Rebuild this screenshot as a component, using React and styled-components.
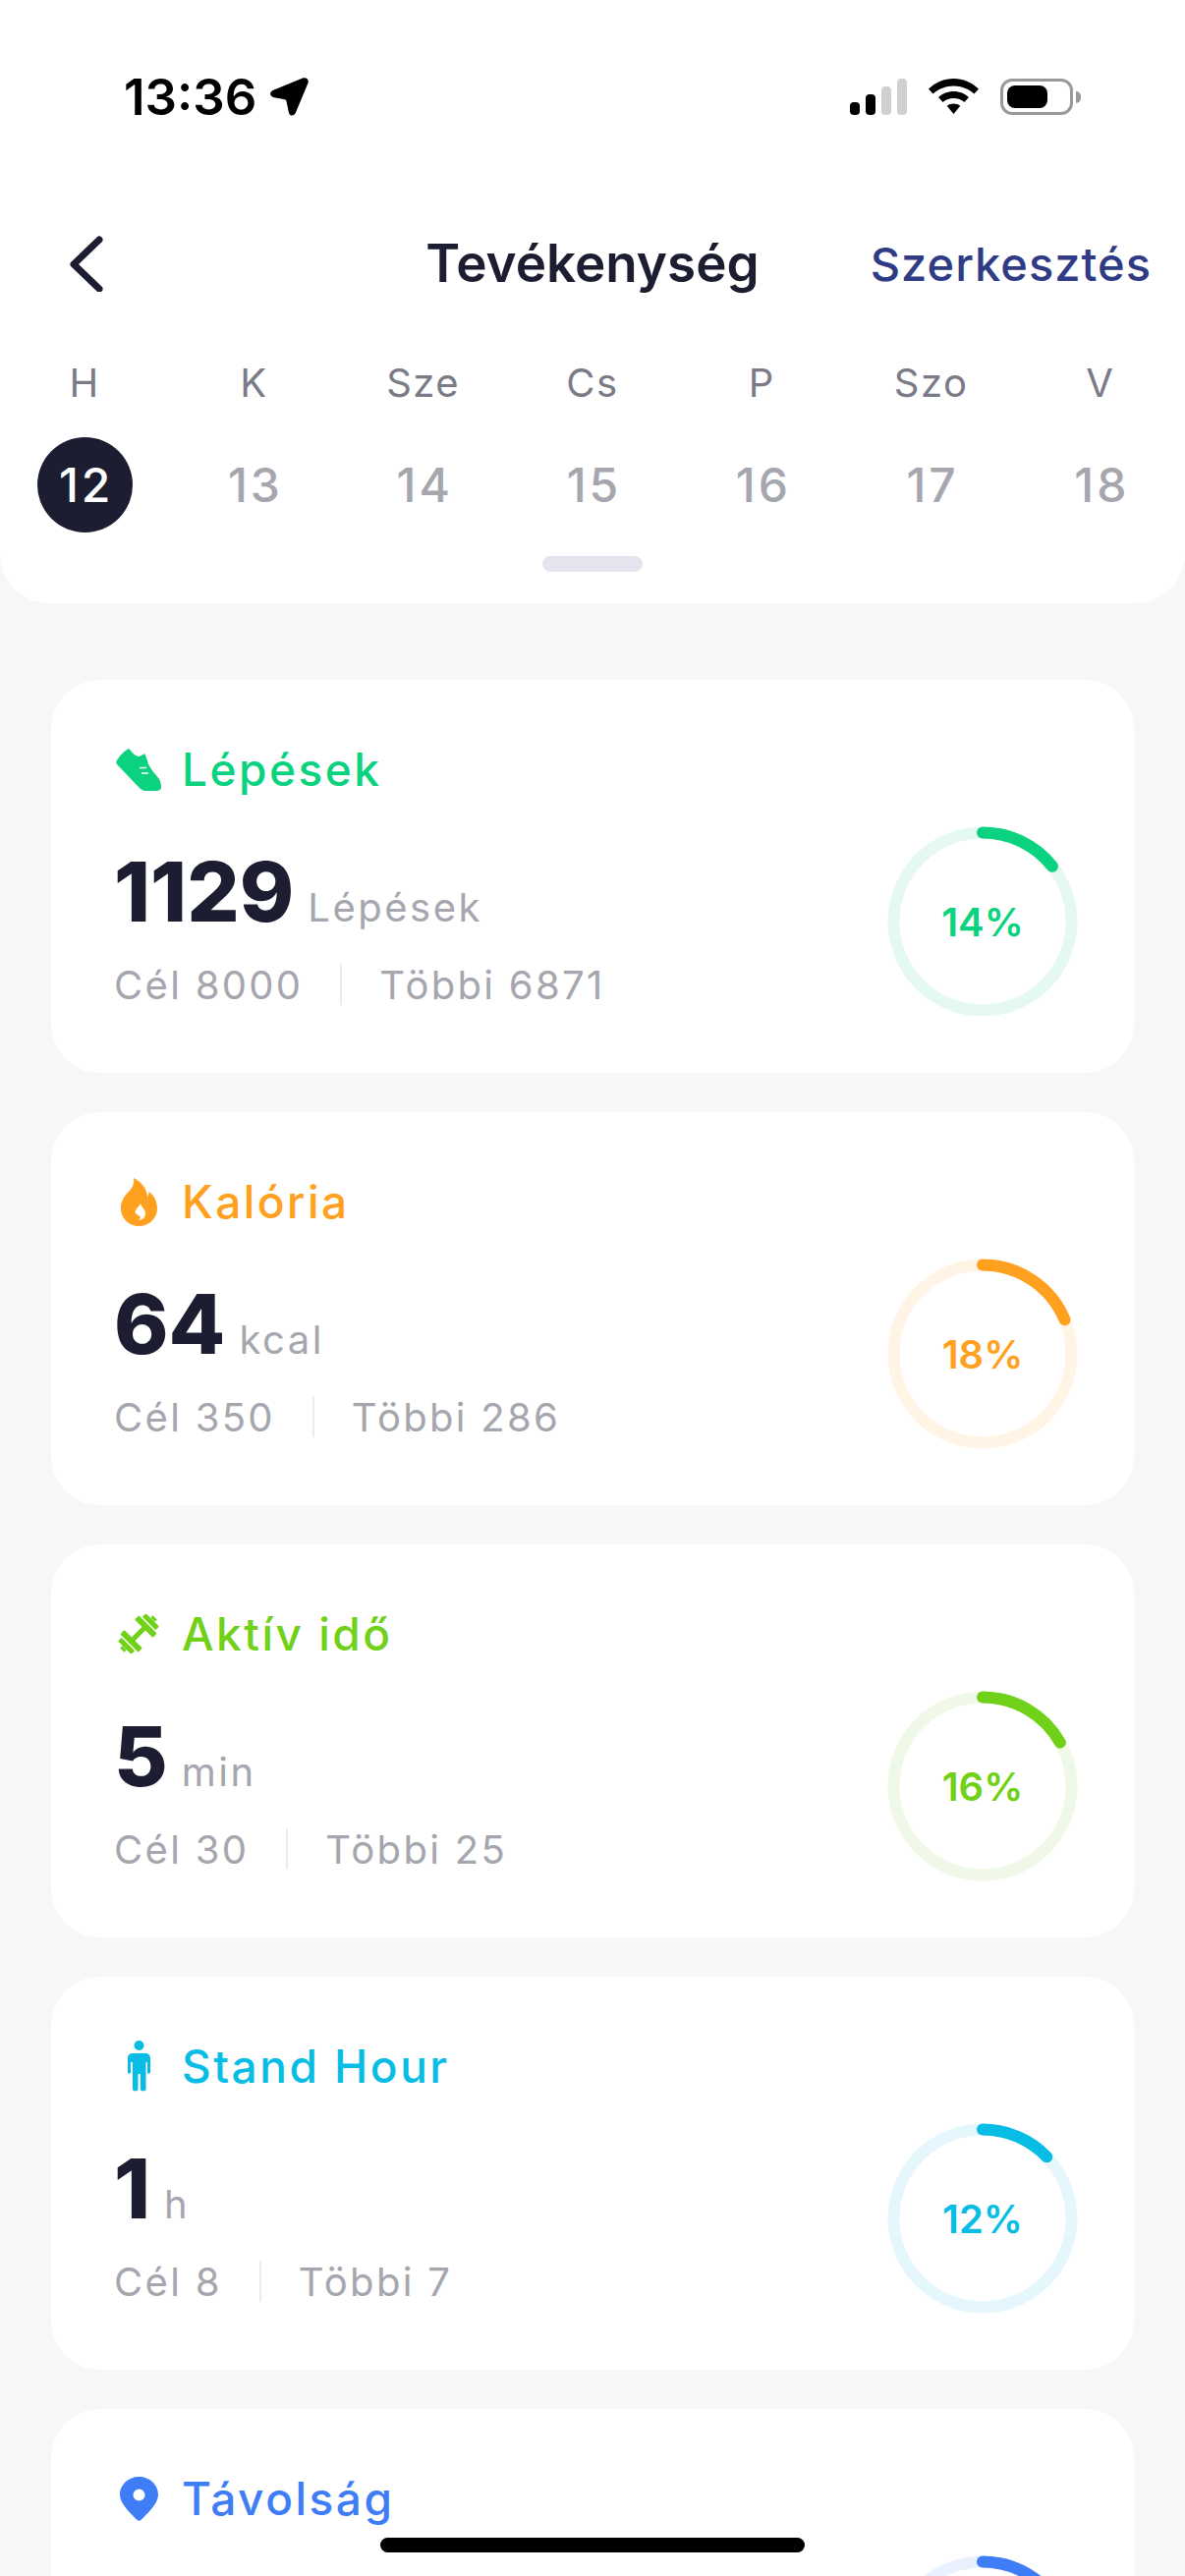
import styled, { createGlobalStyle } from "styled-components";

const GlobalStyle = createGlobalStyle`
  html, body {
    margin: 0;
    padding: 0;
    background: #f6f7f9;
  }
  * { box-sizing: border-box; }
`;

const days = [
  { label: "H", date: 12, active: true },
  { label: "K", date: 13 },
  { label: "Sze", date: 14 },
  { label: "Cs", date: 15 },
  { label: "P", date: 16 },
  { label: "Szo", date: 17 },
  { label: "V", date: 18 },
];

const ShoeIcon = () => (
  <svg width="46" height="43" viewBox="0 0 46 43">
    <path fill="currentColor" d="M1 12 C4 7 9 2 13 0 C15 1 17 6 22 8 C25 8 27 6 29 5 C31 8 32 12 33 16 C36 22 41 27 44 31 C46 34 46 38 46 40 C45 42 44 43 41 43 L30 43 C27 43 24 40 21 37 L2 17 C0 15 0 14 1 12 Z" />
    <path stroke="#fff" strokeWidth="1.6" d="M24 19.500 H31 M26 25 H33" />
  </svg>
);

const FlameIcon = () => (
  <svg width="37" height="49" viewBox="0 0 37 49">
    <path fill="currentColor" d="M13 0 C21 4 27 11 27 20 C28 18 28.500 16 28.500 14 C34 18 37 24 37 31 C37 41 29 49 18.500 49 C8 49 0 41 0 31 C0 24 3 19 7 15 C11 11 14 7 13 0 Z" />
    <path fill="#fff" d="M20 26 C21 30 25 32 25 36 C25 40 22 43 18 43 C21 41 20 39 18 38 C16 37 14 36 15 33 C16 30 19 29 20 26 Z" />
  </svg>
);

const DumbbellIcon = () => (
  <svg width="42" height="40" viewBox="-21 -20 42 40">
    <g fill="currentColor" transform="rotate(-45)">
      <rect x="-8" y="-2.500" width="16" height="5" />
      <rect x="-13.500" y="-13" width="6" height="26" rx="1" />
      <rect x="7.500" y="-13" width="6" height="26" rx="1" />
      <rect x="-20" y="-9.500" width="5" height="19" rx="1" />
      <rect x="15" y="-9.500" width="5" height="19" rx="1" />
      <rect x="-23.500" y="-3" width="3" height="6" />
      <rect x="20.500" y="-3" width="3" height="6" />
    </g>
  </svg>
);

const PersonIcon = () => (
  <svg width="23" height="52" viewBox="0 0 23 52">
    <circle cx="11.500" cy="5" r="5" fill="currentColor" />
    <path fill="currentColor" d="M5 13 H18 C21 13 23 15 23 18 V32 C23 34 20 34 20 32 V22 H18.500 V49.500 C18.500 52 13 52 13 49.500 V34 H10.500 V49.500 C10.500 52 5 52 5 49.500 V22 H3 V32 C3 34 0 34 0 32 V18 C0 15 2 13 5 13 Z" />
  </svg>
);

const PinIcon = () => (
  <svg width="39" height="45" viewBox="0 0 39 45">
    <path fill="currentColor" fillRule="evenodd" d="M19.500 0 C30 0 39 8 39 18 C39 28 28 37 21.500 44 C20.500 45 18.500 45 17.500 44 C11 37 0 28 0 18 C0 8 9 0 19.500 0 Z M19.500 12.500 A6 6 0 1 0 19.500 24.500 A6 6 0 1 0 19.500 12.500 Z" />
  </svg>
);

// the fifth card is cut by the bottom of the screen, only its title and the top of its ring show
const cards = [
  { title: "Lépések", color: "#0bd27e", track: "#e6f9f1", Icon: ShoeIcon, value: "1129", unit: "Lépések", goal: "Cél 8000", left: "Többi 6871", percent: 14, arc: 14.300 },
  { title: "Kalória", color: "#ffa01e", track: "#fff4e6", Icon: FlameIcon, value: "64", unit: "kcal", goal: "Cél 350", left: "Többi 286", percent: 18, arc: 18.700 },
  { title: "Aktív idő", color: "#6fd118", track: "#f0f9e7", Icon: DumbbellIcon, value: "5", unit: "min", goal: "Cél 30", left: "Többi 25", percent: 16, arc: 16.800 },
  { title: "Stand Hour", color: "#08bde5", track: "#e5f7fc", Icon: PersonIcon, value: "1", unit: "h", goal: "Cél 8", left: "Többi 7", percent: 12, arc: 12.800 },
  { title: "Távolság", color: "#3f7df6", track: "#e9f0fe", Icon: PinIcon, arc: 16.800 },
];

const Ring = ({ percent, arc, color, track }) => {
  const r = 90.500;
  const length = 2 * Math.PI * r;
  const dash = (length * arc) / 100;
  return (
    <RingBox>
      <svg width="194" height="194" viewBox="0 0 194 194">
        <circle cx="97" cy="97" r={r} fill="none" stroke={track} strokeWidth="12" />
        <circle
          cx="97"
          cy="97"
          r={r}
          fill="none"
          stroke={color}
          strokeWidth="12"
          strokeLinecap="round"
          strokeDasharray={`${dash} ${length}`}
          transform="rotate(-90 97 97)"
        />
      </svg>
      {percent && <RingLabel $color={color}>{percent}%</RingLabel>}
    </RingBox>
  );
};

const ActivityCard = ({ title, color, track, Icon, value, unit, goal, left, percent, arc }) => (
  <Card>
    <CardInfo>
      <CardTitle $color={color}>
        <IconSlot><Icon /></IconSlot>
        {title}
      </CardTitle>
      {value && (
        <>
          <ValueRow>
            <Value>{value}</Value>
            <Unit>{unit}</Unit>
          </ValueRow>
          <GoalRow>
            <span>{goal}</span>
            <GoalDivider />
            <span>{left}</span>
          </GoalRow>
        </>
      )}
    </CardInfo>
    <Ring percent={percent} arc={arc} color={color} track={track} />
  </Card>
);

const App = () => (
  <>
    <GlobalStyle />
    <Page>
      <Header>
        <StatusBar>
          <Clock>
            13:36
            <svg width="39" height="39" viewBox="0 0 39 39">
              <path fill="#000" d="M33 0.500 C37 -0.500 39.500 2 38.500 5.500 L26 35.500 C24.500 39.500 20 39.500 19 36 L16.500 24 C16.300 23 15.800 22.500 14.800 22.300 L3 20 C-0.500 19 -1 15 2.500 13 Z" />
            </svg>
          </Clock>
          <StatusIcons>
            <svg width="58" height="37" viewBox="0 0 58 37">
              <rect x="0" y="24" width="10" height="13" rx="4" fill="#000" />
              <rect x="16" y="16" width="10" height="21" rx="4" fill="#000" />
              <rect x="32" y="8" width="10" height="29" rx="4" fill="#cfcfcf" />
              <rect x="48" y="0" width="10" height="37" rx="4" fill="#cfcfcf" />
            </svg>
            <svg width="51" height="36" viewBox="0 0 51 36">
              <path fill="#000" d="M25.500 0 C35 0 44 4 51 10.500 L46.500 15.500 C41 10.500 33.500 7.500 25.500 7.500 C17.500 7.500 10 10.500 4.500 15.500 L0 10.500 C7 4 16 0 25.500 0 Z" />
              <path fill="#000" d="M25.500 13 C31.500 13 37 15.300 41 19 L36.500 24 C33.500 21.500 29.700 20 25.500 20 C21.300 20 17.500 21.500 14.500 24 L10 19 C14 15.300 19.500 13 25.500 13 Z" />
              <path fill="#000" d="M25.500 25.500 C28 25.500 30.300 26.300 32.300 27.800 L25.500 36 L18.700 27.800 C20.700 26.300 23 25.500 25.500 25.500 Z" />
            </svg>
            <Battery>
              <BatteryFill />
              <BatteryNub />
            </Battery>
          </StatusIcons>
        </StatusBar>
        <NavBar>
          <BackButton>
            <svg width="34" height="58" viewBox="0 0 34 58">
              <path fill="none" stroke="#1c1d30" strokeWidth="7" strokeLinecap="round" strokeLinejoin="round" d="M30 5 L4 30 L30 55" />
            </svg>
          </BackButton>
          <NavTitle>Tevékenység</NavTitle>
          <EditLink>Szerkesztés</EditLink>
        </NavBar>
        <Week>
          {days.map((d) => (
            <Day key={d.label}>
              <DayLabel>{d.label}</DayLabel>
              <DayDate $active={d.active}>{d.date}</DayDate>
            </Day>
          ))}
        </Week>
        <Handle />
      </Header>
      <CardList>
        {cards.map((c) => (
          <ActivityCard key={c.title} {...c} />
        ))}
      </CardList>
      <HomeIndicator />
    </Page>
  </>
);

const Page = styled.div`
  position: relative;
  width: 1206px;
  height: 2622px;
  overflow: hidden;
  background: #f6f7f9;
  font-family: Inter, "Noto Sans", "Liberation Sans", sans-serif;
`;

const Header = styled.header`
  height: 614px;
  background: #fff;
  border-radius: 0 0 50px 50px;
  display: flex;
  flex-direction: column;
`;

const StatusBar = styled.div`
  margin-top: 68px;
  height: 60px;
  padding: 0 114px 0 126px;
  display: flex;
  justify-content: space-between;
  align-items: center;
`;

const Clock = styled.div`
  display: flex;
  align-items: center;
  gap: 14px;
  font-size: 51px;
  font-weight: 600;
  color: #000;
`;

const StatusIcons = styled.div`
  display: flex;
  align-items: center;
  gap: 22px;
`;

const Battery = styled.div`
  position: relative;
  width: 74px;
  height: 37px;
  border: 3px solid #999;
  border-radius: 12px;
  padding: 4px;
`;

const BatteryFill = styled.div`
  width: 41px;
  height: 100%;
  background: #000;
  border-radius: 8px;
`;

const BatteryNub = styled.div`
  position: absolute;
  right: -11px;
  top: 10px;
  width: 5px;
  height: 12px;
  background: #999;
  border-radius: 0 6px 6px 0;
`;

const NavBar = styled.div`
  margin-top: 109px;
  height: 62px;
  padding: 0 34px 0 71px;
  display: flex;
  align-items: center;
  justify-content: space-between;
  position: relative;
`;

const BackButton = styled.div`
  width: 34px;
  height: 58px;
`;

const NavTitle = styled.h1`
  position: absolute;
  left: 0;
  right: 0;
  margin: 0;
  text-align: center;
  font-size: 53px;
  font-weight: 600;
  color: #1c1d30;
`;

const EditLink = styled.div`
  font-size: 47px;
  font-weight: 500;
  color: #2f3b85;
  letter-spacing: 1px;
`;

const Week = styled.div`
  margin-top: 66px;
  display: grid;
  grid-template-columns: repeat(7, 1fr);
`;

const Day = styled.div`
  display: flex;
  flex-direction: column;
  align-items: center;
  gap: 30px;
`;

const DayLabel = styled.div`
  height: 50px;
  line-height: 50px;
  font-size: 40px;
  color: #7a7b87;
  letter-spacing: 1.500px;
`;

const DayDate = styled.div`
  width: 97px;
  height: 97px;
  border-radius: 50%;
  display: flex;
  align-items: center;
  justify-content: center;
  font-size: 48px;
  font-weight: 500;
  letter-spacing: 3px;
  text-indent: 3px;
  color: ${(p) => (p.$active ? "#fff" : "#a5a6ae")};
  background: ${(p) => (p.$active ? "#1c1d30" : "transparent")};
`;

const Handle = styled.div`
  align-self: center;
  margin-top: 24px;
  width: 102px;
  height: 16px;
  border-radius: 8px;
  background: #e4e4ee;
`;

const CardList = styled.main`
  padding: 78px 52px 0 52px;
  display: flex;
  flex-direction: column;
  gap: 40px;
`;

const Card = styled.section`
  flex: none;
  height: 400px;
  background: #fff;
  border-radius: 50px;
  padding: 61px 57px 57px 64px;
  display: flex;
  justify-content: space-between;
`;

const CardInfo = styled.div`
  display: flex;
  flex-direction: column;
`;

const CardTitle = styled.div`
  height: 60px;
  display: flex;
  align-items: center;
  gap: 19px;
  font-size: 46px;
  font-weight: 500;
  letter-spacing: 2.500px;
  color: ${(p) => p.$color};
`;

const IconSlot = styled.span`
  width: 50px;
  display: flex;
  justify-content: center;
`;

const ValueRow = styled.div`
  margin-top: 47px;
  height: 96px;
  display: flex;
  align-items: baseline;
  gap: 14px;
`;

const Value = styled.div`
  font-size: 84px;
  line-height: 96px;
  font-weight: 800;
  color: #1c1d30;
`;

const Unit = styled.div`
  font-size: 40px;
  color: #a5a6ae;
  letter-spacing: 2.500px;
`;

const GoalRow = styled.div`
  margin-top: 16px;
  height: 60px;
  display: flex;
  align-items: center;
  gap: 38px;
  font-size: 40px;
  color: #a5a6ae;
  letter-spacing: 2.300px;
`;

const GoalDivider = styled.i`
  width: 2px;
  height: 42px;
  background: #ececf0;
`;

const RingBox = styled.div`
  position: relative;
  align-self: flex-end;
  width: 194px;
  height: 194px;
  flex: none;
`;

const RingLabel = styled.div`
  position: absolute;
  inset: 0;
  display: flex;
  align-items: center;
  justify-content: center;
  font-size: 40px;
  font-weight: 600;
  color: ${(p) => p.$color};
`;

const HomeIndicator = styled.div`
  position: absolute;
  left: 387px;
  bottom: 24px;
  width: 432px;
  height: 15px;
  border-radius: 8px;
  background: #000;
`;

export default App;
